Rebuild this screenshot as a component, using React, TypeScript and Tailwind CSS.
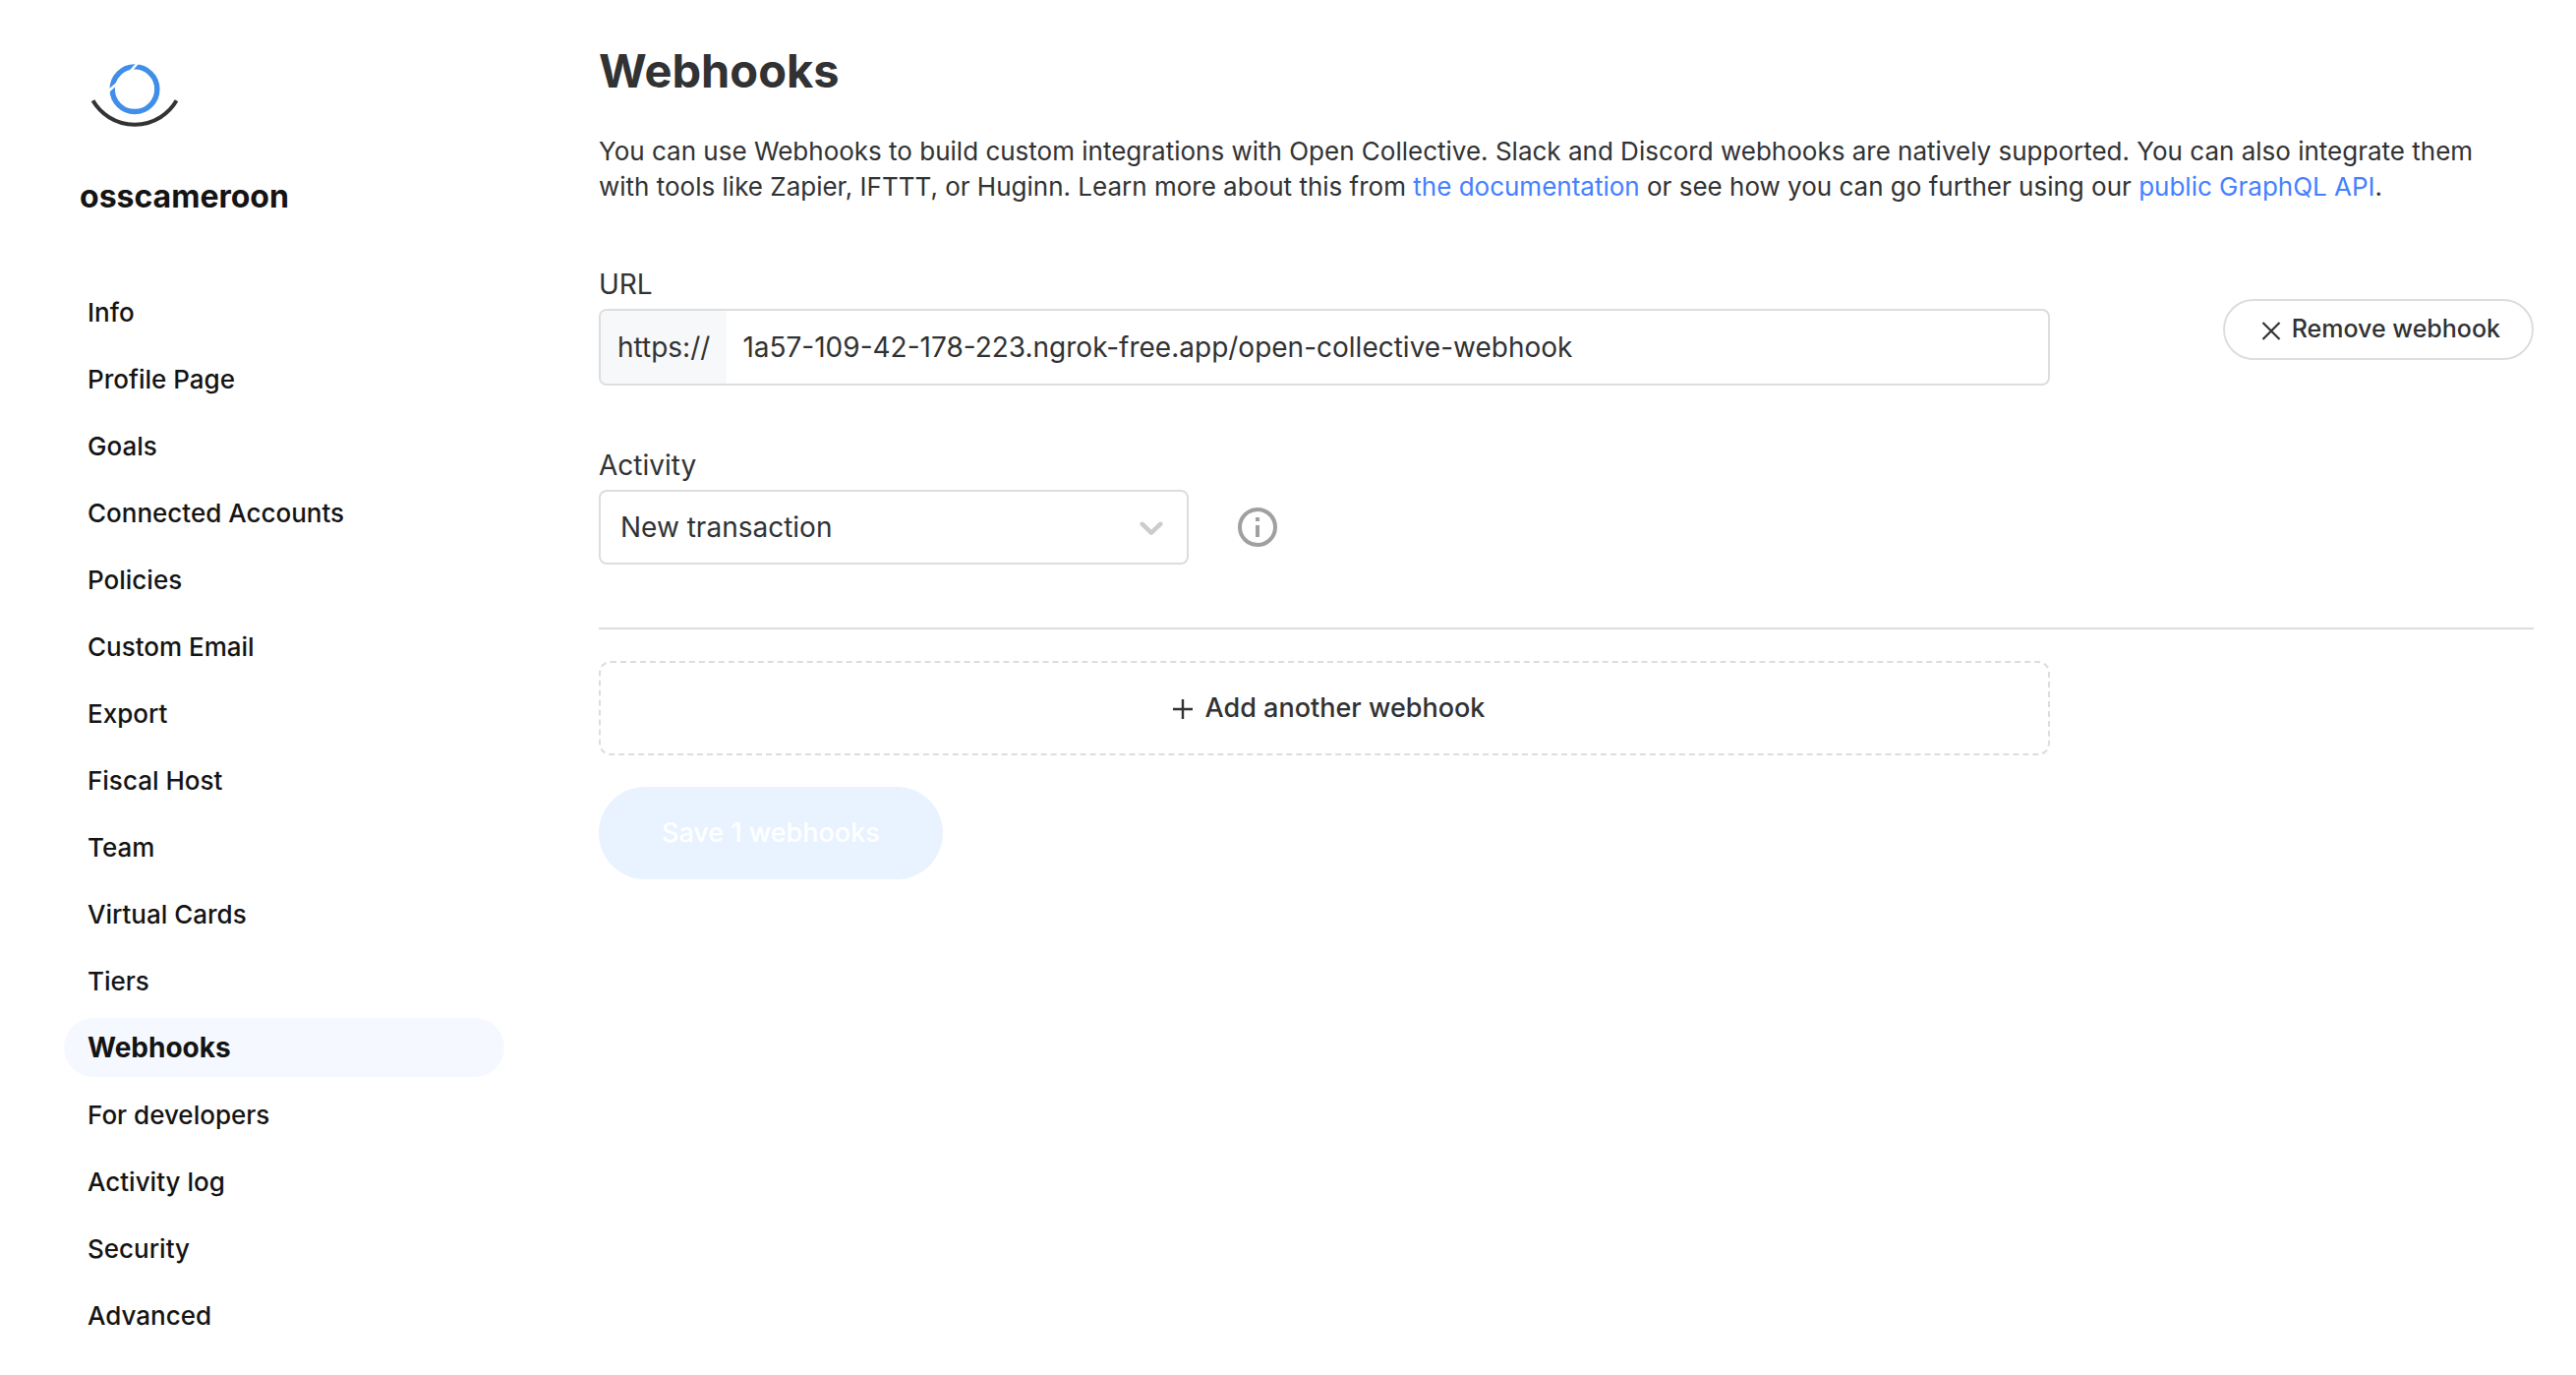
import { useState } from "react";

const navItems = [
  "Info",
  "Profile Page",
  "Goals",
  "Connected Accounts",
  "Policies",
  "Custom Email",
  "Export",
  "Fiscal Host",
  "Team",
  "Virtual Cards",
  "Tiers",
  "Webhooks",
  "For developers",
  "Activity log",
  "Security",
  "Advanced",
];

function Logo() {
  return (
    <svg viewBox="0 0 112 112" className="size-28" role="img" aria-label="osscameroon logo" fill="none">
      <circle cx="56" cy="54.7" r="22.8" stroke="#3f8eea" strokeWidth="5.4" />
      <path d="M60.5 26.5 L52 36 M29 57 L38.5 48.5" stroke="#ffffff" strokeWidth="2.6" />
      <path d="M13.5 66.3 A49.2 49.2 0 0 0 98.5 66.3" stroke="#333333" strokeWidth="4" />
    </svg>
  );
}

function Sidebar() {
  return (
    <aside className="flex w-112 shrink-0 flex-col pt-9 text-[#141414]">
      <div className="px-4">
        <Logo />
        <p className="mt-8 text-[32px] leading-10 font-bold">osscameroon</p>
      </div>
      <nav className="mt-[67px] flex flex-col gap-2">
        {navItems.map((item) => (
          <a
            key={item}
            href="#"
            aria-current={item === "Webhooks" ? "page" : undefined}
            className={
              item === "Webhooks"
                ? "flex h-15 items-center rounded-full bg-[#f5f9ff] px-6 text-[28px] font-bold"
                : "flex h-15 items-center rounded-full px-6 text-[26px] font-medium"
            }
          >
            {item}
          </a>
        ))}
      </nav>
    </aside>
  );
}

export default function App() {
  const [url, setUrl] = useState("1a57-109-42-178-223.ngrok-free.app/open-collective-webhook");
  return (
    <div className="flex min-h-screen gap-24 bg-white pr-[43px] pl-[65px] font-['Inter',sans-serif] text-[#313233]">
      <Sidebar />
      <main className="min-w-0 flex-1 pt-10">
        <h1 className="text-[47px] leading-16 font-bold">Webhooks</h1>
        <p className="mt-8 pr-8 text-[26px] leading-9">
          You can use Webhooks to build custom integrations with Open Collective. Slack and Discord webhooks are
          natively supported. You can also integrate them with tools like Zapier, IFTTT, or Huginn. Learn more about
          this from{" "}
          <a href="#" className="text-[#4580ff]">
            the documentation
          </a>{" "}
          or see how you can go further using our{" "}
          <a href="#" className="text-[#4580ff]">
            public GraphQL API
          </a>
          .
        </p>

        <form onSubmit={(e) => e.preventDefault()}>
          <section className="mt-[61px] flex items-start border-b-2 border-[#dcdddf] pb-16">
            <div className="w-3/4">
              <label htmlFor="url" className="block text-[28px] leading-10">
                URL
              </label>
              <div className="mt-[5px] flex h-[78px] overflow-hidden rounded-lg border-2 border-[#dcdddf]">
                <span className="flex items-center bg-[#f7f8fa] px-[17px] text-[28px]">https://</span>
                <input
                  id="url"
                  type="text"
                  value={url}
                  onChange={(e) => setUrl(e.target.value)}
                  className="min-w-0 flex-1 px-4 text-[28px] outline-none"
                />
              </div>
              <label htmlFor="activity" className="mt-[61px] block text-[28px] leading-10">
                Activity
              </label>
              <div className="mt-[5px] flex items-center gap-12">
                <div className="relative w-150">
                  <select
                    id="activity"
                    className="block h-19 w-full appearance-none rounded-lg border-2 border-[#dcdddf] bg-white px-5 text-[28px]"
                  >
                    <option>New transaction</option>
                  </select>
                  <svg
                    viewBox="0 0 20 20"
                    className="pointer-events-none absolute top-1/2 right-[18px] size-10 -translate-y-1/2 fill-[#cccccc]"
                    aria-hidden="true"
                  >
                    <path d="M4.516 7.548c0.436-0.446 1.043-0.481 1.576 0l3.908 3.747 3.908-3.747c0.533-0.481 1.141-0.446 1.574 0 0.436 0.445 0.408 1.197 0 1.615-0.406 0.418-4.695 4.502-4.695 4.502-0.217 0.223-0.502 0.335-0.787 0.335s-0.57-0.112-0.789-0.335c0 0-4.287-4.084-4.695-4.502s-0.436-1.17 0-1.615z" />
                  </svg>
                </div>
                <svg viewBox="0 0 44 44" className="size-11" role="img" aria-label="About this activity" fill="none">
                  <circle cx="22" cy="22" r="18" stroke="#a0a0a0" strokeWidth="4" />
                  <path d="M22 12v4M22 20v12" stroke="#a0a0a0" strokeWidth="4" />
                </svg>
              </div>
            </div>
            <div className="flex w-1/4 justify-end pt-[35px]">
              <button
                type="button"
                className="flex h-[62px] items-center gap-2.5 rounded-full border-2 border-[#dcdddf] bg-white pr-8 pl-9 text-[25px] font-medium"
              >
                <svg viewBox="0 0 22 22" className="size-[22px]" aria-hidden="true" fill="none">
                  <path d="M2.5 4l17 17M19.5 4l-17 17" stroke="currentColor" strokeWidth="2.2" />
                </svg>
                Remove webhook
              </button>
            </div>
          </section>

          <button
            type="button"
            className="mt-8 flex h-24 w-3/4 items-center justify-center gap-3 rounded-xl border-2 border-dashed border-[#dcdddf] pl-2 text-[27px] font-medium"
          >
            <svg viewBox="0 0 22 22" className="size-[22px]" aria-hidden="true" fill="none">
              <path d="M11 2v20M1 12h20" stroke="currentColor" strokeWidth="2.4" />
            </svg>
            Add another webhook
          </button>
          <button
            type="submit"
            disabled
            className="mt-8 flex h-[94px] items-center justify-center rounded-full bg-[#e8f3ff] px-16 text-[27px] font-medium text-white"
          >
            Save 1 webhooks
          </button>
        </form>
      </main>
    </div>
  );
}
